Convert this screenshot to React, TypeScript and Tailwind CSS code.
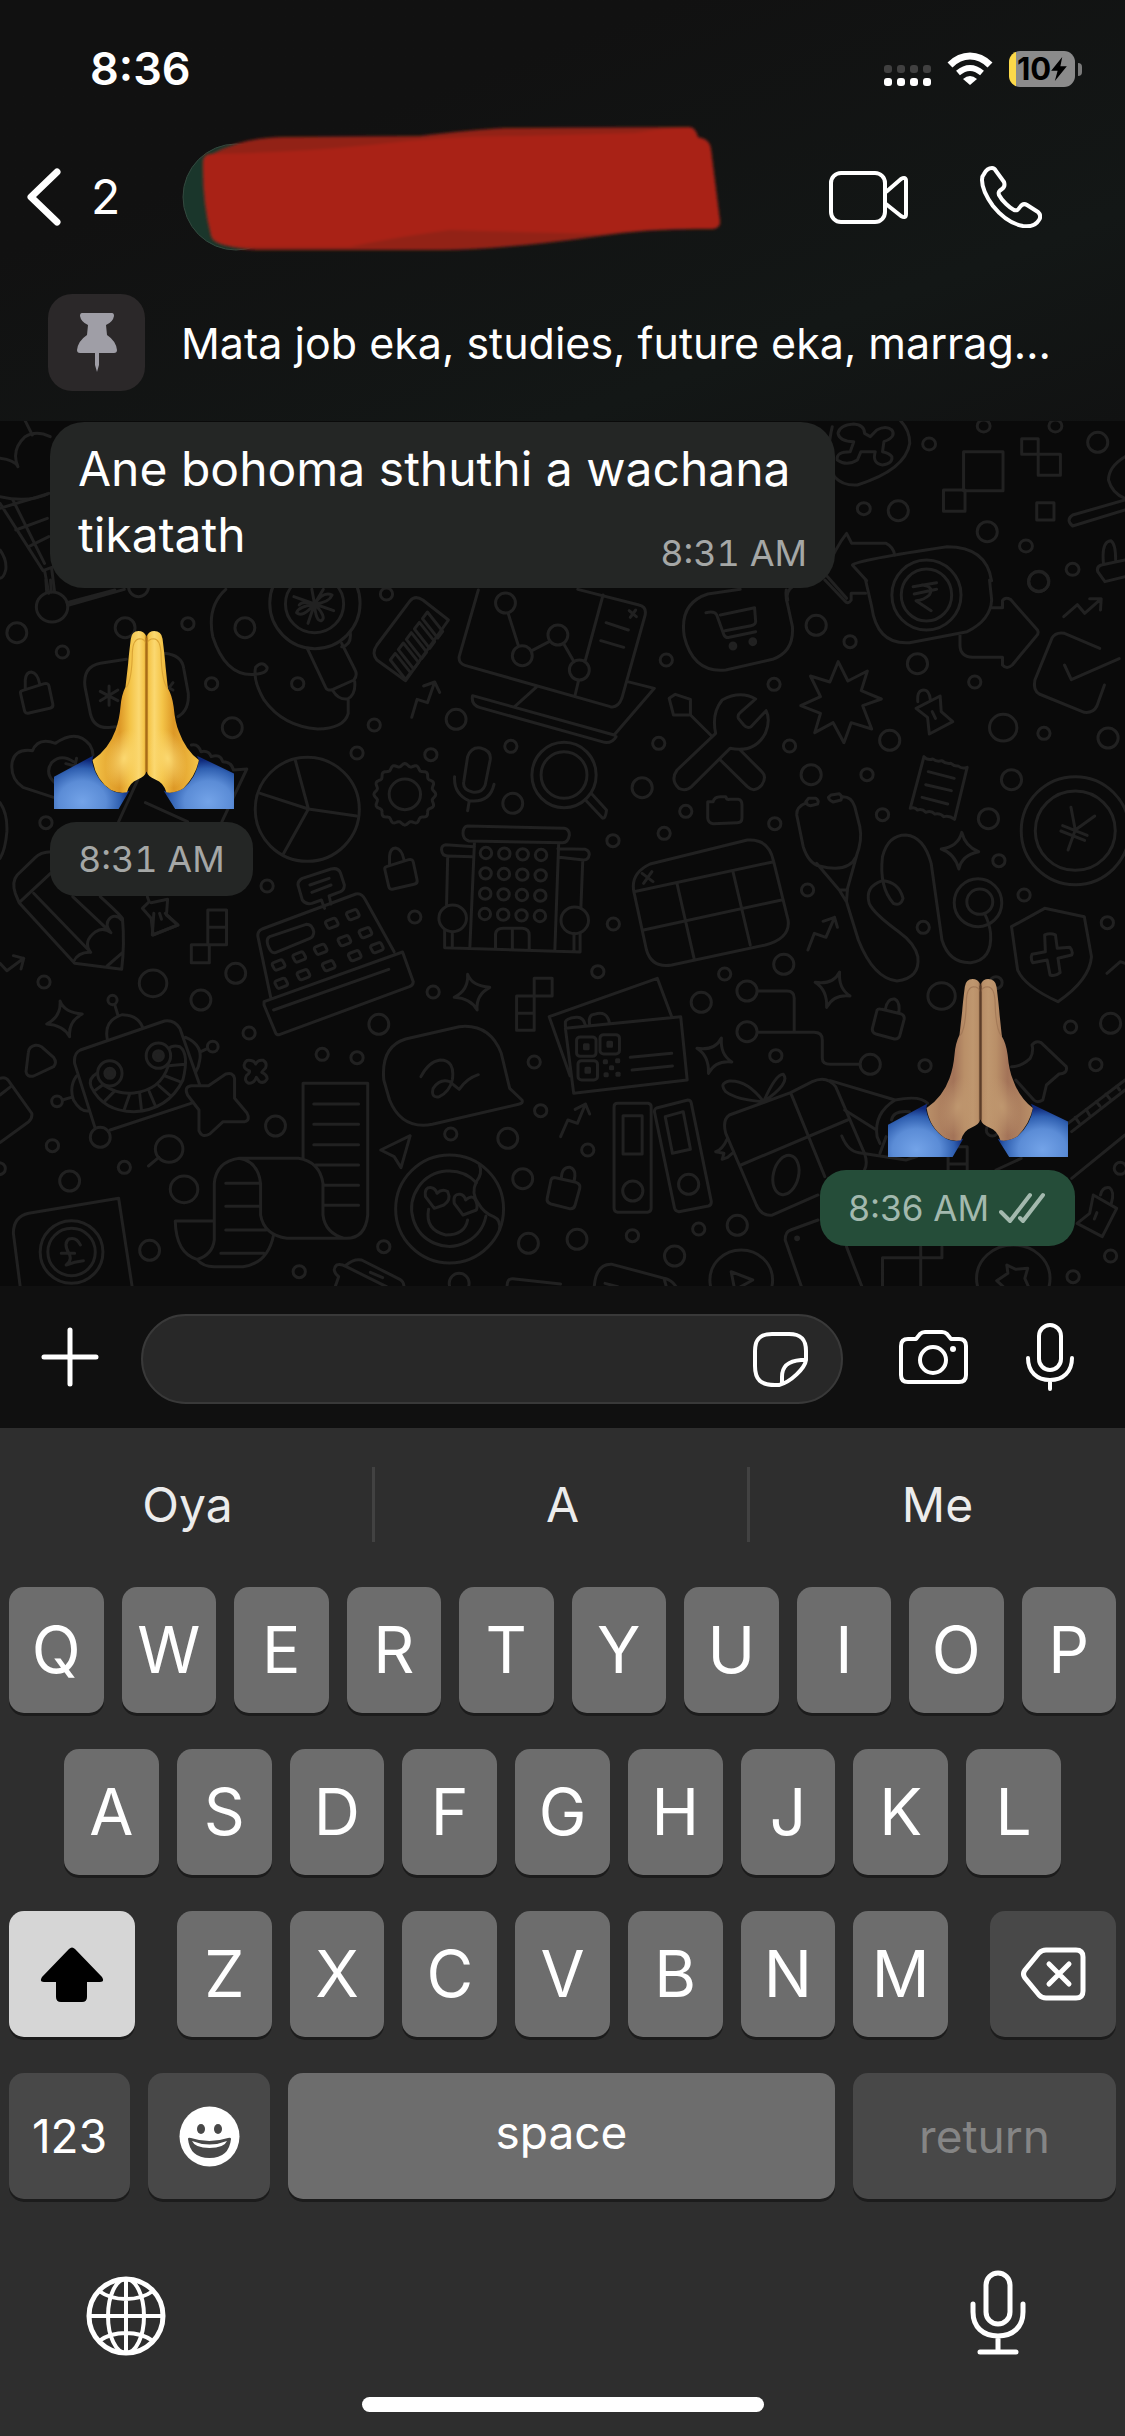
import React from "react";

/* ---------- Wallpaper ---------- */

type Dots = number[][];

function Panel({
  transform,
  rx,
  small,
  medium,
  large = [],
  paths,
  children,
}: {
  transform: string;
  rx: number[];
  small: Dots;
  medium: Dots;
  large?: Dots;
  paths: string[];
  children?: React.ReactNode;
}) {
  return (
    <g transform={transform}>
      {small.map(([x, y]) => (
        <ellipse key={`s${x}-${y}`} cx={x} cy={y} rx={rx[0]} ry={18} />
      ))}
      {medium.map(([x, y]) => (
        <ellipse key={`m${x}-${y}`} cx={x} cy={y} rx={rx[1]} ry={30} />
      ))}
      {large.map(([x, y]) => (
        <ellipse key={`l${x}-${y}`} cx={x} cy={y} rx={rx[2]} ry={40} />
      ))}
      {paths.map((d, i) => (
        <path key={i} d={d} />
      ))}
      {children}
    </g>
  );
}

function scallop(cx: number, cy: number, rx: number, ry: number, n: number) {
  const steps = n * 8;
  let d = "";
  for (let i = 0; i < steps; i++) {
    const a = (i / steps) * Math.PI * 2;
    const k = 1 + 0.05 * Math.cos(a * n);
    d += `${i ? "L" : "M"}${(cx + rx * k * Math.cos(a)).toFixed(1)} ${(cy + ry * k * Math.sin(a)).toFixed(1)}`;
  }
  return d + "Z";
}

const LOCK =
  "M58 332Q52 334 54 342L64 392Q66 402 76 399L130 385Q140 382 138 372L128 318Q126 308 116 311ZM66 328V300Q68 276 82 276Q98 278 104 313";
const SPARK = "M157 243Q168 278 215 282Q178 305 182 350Q165 315 122 312Q160 290 157 243Z";
const SPARK_R = "M776 156Q772 205 805 228Q760 222 740 262Q742 210 708 187Q758 195 776 156Z";

const topPaths = [
  "M35 452L45 495M70 500Q50 480 35 500Q15 540 25 590M0 565Q20 570 25 590M0 680Q40 700 68 670",
  "M0 700L60 902L75 890M18 690L62 880M0 715L66 672M22 780L66 745M40 830L68 800M62 900L68 970M72 895L76 965M0 840Q10 870 8 900Q5 925 0 925",
  "M1160 470Q1150 560 1163 620Q1175 648 1195 645Q1262 600 1268 520Q1268 480 1255 452",
  "M1190 462Q1170 465 1168 490Q1170 515 1190 515L1185 545Q1165 545 1167 570Q1180 590 1195 570L1200 545L1220 545Q1215 580 1230 585Q1245 580 1243 560Q1240 550 1230 545L1232 515Q1250 500 1243 480Q1235 465 1222 480L1213 500L1205 490Q1205 465 1190 462Z",
  "M1343 545H1398V662H1343ZM1315 660H1345V724H1315ZM1424 506H1447V553H1424ZM1447 553H1478V616H1447ZM1445 698H1469V750H1445Z",
  "M1568 560Q1545 590 1545 630Q1550 670 1568 685M1568 690L1495 735Q1485 750 1495 768L1568 720",
  "M1188 885Q1195 870 1320 830Q1375 830 1382 932L1381 932M1188 885L1208 932",
  "M1150 910Q1165 830 1180 790L1187 820H1235Q1245 830 1247 855M1098 990Q1090 940 1150 912L1180 985",
  "M1568 870L1535 885Q1528 890 1530 905L1540 935L1568 920M1538 880Q1535 815 1548 812Q1555 820 1555 870",
];

const leftPaths = [
  "M120 0L122 36M132 0L134 36M175 68L300 30M178 76L325 28",
  LOCK,
  "M330 238L262 250Q216 260 222 320L236 400Q245 448 290 442L305 440M430 220Q475 225 480 265L492 340Q495 390 465 410M285 318V376M262 334L308 362M308 330L262 362M432 318L452 330M434 335L452 308",
  "M140 652L60 622Q25 595 32 545Q40 505 85 512Q100 470 145 490Q200 445 235 495Q243 510 243 525M145 610Q115 580 135 548Q160 520 192 545M200 535L196 558L172 551",
  "M500 495Q518 490 525 515Q545 510 552 530Q575 520 582 545Q605 545 610 570L645 567L580 725M360 600L310 725M380 668L490 725",
  "M0 668Q20 700 18 755Q14 810 0 835",
  "M135 815Q105 815 90 835L45 885Q30 905 40 940L50 968L195 1150L318 1168Q326 1090 320 1015Q310 1000 262 950M50 968L132 880M88 940L237 1117Q205 1115 192 1145M237 1117Q215 1085 250 1055Q270 1040 290 1058M190 950L290 1058Q270 1030 290 1012Q305 1003 318 1020M280 1158L320 1118",
  "M385 950L390 965L372 985L395 1015L400 1065L465 1035L435 1005L438 958L395 968M417 1000L422 1018",
  "M543 990H592V1094H543ZM543 1042H592M500 1094H547V1148H500Z",
  "M590 28Q540 80 556 170Q590 290 665 283Q700 280 698 262Q685 240 668 262Q660 300 690 360Q740 440 830 447Q900 445 910 400V360M803 205L850 320Q855 335 870 328L925 300Q935 285 928 270L893 190M870 332Q885 360 908 357Q930 345 927 305M893 200Q920 195 915 155",
  "M822 72L872 92M822 72L768 50M822 72L805 130M822 72Q780 80 775 98Q790 115 822 72Q825 125 840 122Q855 112 822 72Q860 68 868 45Q845 32 822 72Q790 62 782 75M822 72L815 28M822 72L845 28",
  "M1105 60Q1085 45 1072 62L985 195Q970 220 985 240L1060 302L1172 120Z",
  "M1076 412L1090 358L1117 368L1136 306M1107 318L1136 306L1149 337",
  "M1250 30L1200 230Q1198 250 1215 256L1595 380Q1615 385 1625 355L1686 105Q1690 80 1670 75L1510 28M1576 45L1530 240M1503 345L1512 302M1328 100L1355 198M1390 212L1435 185M1475 195L1500 245M1403 320L1345 380M1235 347L1605 465L1710 325L1640 305M1235 347Q1230 375 1255 383L1580 487Q1600 490 1610 470M1584 128L1642 150M1570 182L1630 202",
  "M772 542L806 687L932 708M806 687L680 640M806 687L740 823",
  "M1222 530Q1232 500 1256 504Q1285 512 1281 540L1268 615Q1260 640 1235 636Q1208 630 1212 605ZM1188 590Q1185 640 1225 662Q1280 670 1291 613M1226 665L1222 692",
  "M1545 640L1585 690Q1583 715 1575 715L1530 660",
  "M1222 738L1475 745Q1488 748 1488 765Q1485 788 1470 788L1225 783Q1210 778 1210 760Q1210 740 1222 738ZM1240 800L1165 794Q1153 796 1154 810Q1155 828 1170 828L1235 830M1458 806L1530 808Q1540 812 1540 823Q1538 840 1525 840L1462 832M1240 785L1228 1100M1460 790L1450 1110M1170 828L1167 975M1523 840L1518 985M1162 1050V1103L1516 1116V1060M1182 1060V1103M1500 1060V1112M1295 1106V1062Q1297 1045 1315 1045H1365Q1383 1047 1383 1065V1108M1339 1045V1106",
  "M780 920Q775 905 790 895L865 867Q885 862 890 880L900 915Q900 930 890 935L860 948L865 972M780 920L790 960Q800 975 815 970L840 960L848 985M810 915L860 895M815 937L865 915M708 1255L675 1075Q670 1055 685 1047L930 942Q945 938 955 960L1030 1115M705 1070L800 1033Q815 1032 820 1055Q820 1070 810 1075L720 1118Q708 1122 700 1095Q695 1075 705 1070M690 1265L1052 1116L1080 1205Q1080 1215 1070 1220L730 1364Q722 1365 720 1358L690 1275ZM715 1290L1016 1168",
];

const registerKeys = [
  [728, 1155], [782, 1131], [838, 1108], [900, 1082], [955, 1058], [735, 1210],
  [793, 1184], [859, 1157], [927, 1127], [985, 1103], [867, 1030], [922, 1004],
];

const rightPaths = [
  "M628 30Q625 50 632 75L645 140Q650 215 590 238L460 270Q370 280 345 170Q330 70 410 42L500 28M405 98Q430 92 435 105L455 165Q460 175 470 172L543 155M445 105L540 83L543 125Q542 135 530 137L458 152",
  "M848 0L865 80Q880 195 970 188L1130 155Q1195 120 1198 60L1192 0M980 20L1045 8M983 42L1045 28M1005 15Q1040 20 1025 45Q1010 60 988 62L1030 92M735 0L790 62Q800 75 808 60V40H848M1198 83H1228V62Q1235 50 1250 58L1325 150Q1330 160 1322 168L1255 255Q1240 270 1228 255V232H1145Q1110 230 1110 195V165",
  "M1398 110L1436 74L1456 100L1500 58M1470 56L1502 56L1500 90",
  "M1498 205L1400 160Q1375 155 1365 175L1318 300Q1312 330 1330 342L1455 397Q1480 400 1490 378L1511 315M1400 255L1419 299L1552 236",
  "M772 245L799 303L853 273L836 332L892 357L840 377L865 447L808 428L788 488L758 428L707 458L723 400L668 377L723 350L695 288L749 306Z",
  "M543 357Q500 330 450 360Q420 400 432 460L325 570Q305 600 330 625Q350 635 365 620L472 505Q540 520 570 460Q585 420 572 392L530 440Q520 447 510 435L495 415Q492 405 500 398ZM303 355L320 343L362 358V405H315ZM362 405L418 465M445 540L520 620Q540 640 560 615Q575 590 560 575L500 510",
  "M993 365Q990 330 1010 330Q1025 330 1028 360M1055 348L988 385L1020 412L1025 462L1090 425L1058 395ZM1033 395L1042 415",
  "M1010 530L972 685Q985 680 992 690Q1005 685 1015 697Q1030 690 1040 702Q1055 698 1065 710Q1080 705 1095 718L1130 562Q1115 568 1105 558Q1095 560 1085 550Q1070 553 1060 542Q1045 547 1035 537Q1020 542 1010 530ZM1022 575L1094 595M1015 614L1086 632M1005 652L1076 672",
  "M410 665H425Q428 650 445 650H460Q463 660 470 658H495Q505 660 505 675V715Q505 728 492 728L425 731Q412 730 410 715Z",
  "M685 668Q655 680 657 705L675 800Q690 850 720 858Q800 880 822 830Q840 780 832 740L818 680Q810 650 785 650M690 655H710Q720 662 715 672L695 677Q683 675 682 665ZM752 645L775 641Q785 648 780 660L758 666Q745 660 745 652ZM712 850L775 930L795 965L828 1080Q870 1195 935 1203Q1000 1195 993 1130Q985 1090 940 1055Q870 1000 858 970Q845 920 895 902Q940 905 952 955Q945 980 925 970Q885 920 895 830Q910 765 960 765Q1010 770 1030 850L1060 1080Q1080 1150 1140 1148Q1200 1140 1195 1060Q1192 1030 1178 1000M825 820L798 925L795 965M775 930H798",
  "M1115 757Q1125 800 1162 815Q1115 825 1107 867Q1095 820 1058 807Q1105 800 1115 757Z",
  "M1418 682L1430 750L1484 708M1430 750L1410 810M1395 737L1463 766M1390 753L1456 781",
  "M205 935Q195 880 250 852L520 780Q580 775 593 845L633 1020Q640 1075 570 1095L310 1155Q255 1165 240 1110ZM205 935L593 845M232 1050L615 960M325 912L372 1135M480 875L528 1095M228 880L258 905M255 875L232 910",
  "M688 1110L706 1060L738 1072L762 1012M730 1024L762 1012L770 1042",
  "M1253 1040L1345 985L1455 1010L1475 1130Q1470 1200 1382 1265Q1290 1220 1270 1170ZM1345 1065Q1360 1058 1375 1065L1380 1105L1415 1102Q1425 1115 1420 1125L1382 1135L1388 1178Q1375 1190 1360 1185L1352 1140L1312 1148Q1305 1135 1310 1123L1347 1115Z",
  "M192 92L212 110M210 90L195 112",
];

const lowerLeftPaths = [
  SPARK,
  "M92 376Q75 380 74 398L68 455Q70 472 88 468L140 440Q150 428 140 412L108 380Q100 374 92 376ZM402 -20L398 45L465 15L432 -20",
  "M0 130L18 152L62 115M35 107L62 115L55 147",
  "M248 622L195 430Q192 400 210 390L430 303Q455 298 470 325L522 495M288 630L505 548M300 255L308 285M280 355Q272 300 320 284Q360 285 373 322M485 352Q530 375 522 420Q520 440 512 455M525 395L543 385M200 468Q180 500 192 540Q210 575 230 573M186 532L163 540",
  "M253 460Q230 475 238 500Q270 575 350 575Q440 570 478 480Q495 400 470 380Q450 375 442 385M270 495Q310 525 350 519Q420 510 440 437M250 510L268 495M275 542L298 515M325 568L338 525M370 573L365 520M405 555L390 515M445 527L415 497M470 485L432 468M483 433L440 437",
  "M590 462Q608 455 613 475V535L645 578Q655 600 640 605L583 605L548 642Q528 655 520 632V570L490 525Q480 500 500 497H545Z",
  "M650 421Q664 421 668 432Q674 418 688 421Q699 428 694 444Q684 455 684 457Q699 465 698 477Q690 492 678 485L670 472Q664 491 650 490Q637 483 644 467Q654 457 652 453Q637 446 638 435Q641 421 650 421Z",
  "M0 475Q15 470 22 482L83 580Q85 595 75 605L0 668M0 525L28 500M415 712L388 738",
  "M55 1120L35 940Q35 890 75 880L310 835L348 1120M210 975Q200 950 180 957Q165 970 180 1000Q190 1020 173 1035Q195 1025 218 1022M160 1000H195",
  "M792 715V490H961V885Q955 955 905 955H750Q690 945 681 885V790Q675 725 625 715H780Q835 725 844 790V885Q850 940 900 955M625 715Q565 725 560 790V960Q555 1005 515 1018M560 903H458Q460 1000 515 1018Q530 1040 560 1040H635Q700 1030 715 945M820 552H937M820 613H937M820 674H937M825 735H937M848 796H937M846 856H937M590 790H680M590 859H680M590 930H695M577 1000H690",
  "M1060 357L1200 320Q1280 310 1310 400L1332 505L1364 540Q1368 550 1355 553L1130 613Q1050 630 1018 540L1003 480Q995 380 1060 357ZM1100 470Q1120 425 1150 420Q1190 420 1182 480Q1175 515 1148 530Q1125 535 1132 505Q1150 475 1175 485L1200 508Q1220 475 1250 464",
  "M1072 647L995 690L1030 710L1048 743Z",
  "M1135 865L1112 830Q1108 800 1128 803Q1138 805 1142 820Q1155 805 1170 815Q1180 840 1160 855ZM1210 885L1187 850Q1183 820 1203 823Q1213 825 1217 840Q1230 825 1240 835Q1250 855 1245 870ZM1120 868Q1110 930 1165 945Q1215 945 1222 900M1253 735Q1262 760 1245 785Q1230 820 1250 850Q1265 880 1290 890Q1310 900 1305 930",
  "M1440 780L1430 835Q1428 848 1440 852L1488 866Q1500 868 1503 855L1515 805Q1518 792 1505 787L1452 773Q1442 772 1440 780ZM1467 775Q1468 740 1490 742Q1508 748 1500 785",
  "M1396 175H1443V228H1396ZM1350 228H1396V331H1350ZM1350 280H1396",
  "M1465 650L1484 600L1509 610L1530 552M1503 568L1530 552L1541 582",
  "M870 1120L885 1070Q865 1050 880 1035Q890 1030 905 1040L1010 1100M905 1035Q925 1015 945 1020L1045 1078Q1055 1085 1056 1100M968 1057L1000 1073M1325 1100Q1325 1075 1340 1076L1465 1092",
];

const lowerRightPaths = [
  SPARK_R,
  "M548 213H630Q650 213 650 235V335M548 337H705Q728 337 728 360V415Q728 433 750 433H832",
  "M880 270L867 325Q865 338 877 342L928 357Q940 358 943 347L955 298Q957 285 945 281L893 268Q883 265 880 270ZM903 268Q908 235 928 237Q945 245 940 280",
  "M-30 290L270 175L310 290M-30 290L28 468M15 325L335 290L353 480L38 520ZM195 412L310 400M200 450L312 438M15 320V305Q18 295 45 292Q65 290 70 315M82 312Q78 285 95 283Q130 270 137 308",
  "M160 550H245Q253 552 253 560V865Q253 875 243 877H160Q150 875 150 865V560Q150 550 160 550ZM175 587H228V702H175ZM262 575Q262 567 268 564L355 540Q362 540 364 548L420 845Q420 855 412 858L330 875Q320 873 318 865ZM292 590L342 575L362 688L312 700Z",
  "M640 518L470 585Q450 600 460 640L545 855Q560 890 590 885L716 825M640 518L700 485Q740 465 765 500L845 700Q855 730 845 750M640 518L735 770M502 735L798 600M565 545Q520 480 470 483Q440 490 460 515Q490 540 565 545Q600 460 620 463Q640 490 565 545M465 655Q450 690 432 695L455 700L450 718L465 712L478 700",
  "M750 482L930 540Q1000 525 1020 550M930 540Q870 580 880 650L888 670M790 570L875 628M782 648Q800 695 830 698L960 720L990 710M888 700L905 650M920 600Q925 570 970 575",
  "M1310 375Q1320 360 1335 368L1405 440Q1410 460 1385 462L1350 495L1340 540Q1325 550 1315 540L1265 480M1253 440Q1280 440 1305 415Q1315 395 1310 375",
  "M1568 480L1410 610M1280 715L1210 750M1568 510L1420 635M1568 645L1420 775M1430 592L1440 608M1460 568L1472 590M1488 545L1498 558M1515 522L1530 542M1545 498L1553 510",
  "M1077 750V680H1130V750M1077 732H1130",
  "M1480 825L1545 865L1505 950L1435 910L1470 880ZM1500 825Q1505 800 1525 803Q1540 815 1530 850M1490 878L1483 897",
  "M475 1055L535 1080L485 1110ZM95 1100Q100 1030 145 1033L290 1075Q310 1080 322 1100M290 1080L295 1100M125 1090L160 1100M670 1100L625 960Q625 935 640 930L716 900M795 980L838 1100M895 1100V1013H1060V980M1001 980V1100M1240 1035L1265 1048L1298 1045L1290 1075L1300 1100M1240 1035L1243 1060L1212 1082L1230 1100M1518 160L1555 125L1568 130",
];

function Wallpaper() {
  return (
    <svg
      aria-hidden="true"
      className="absolute inset-0 h-full w-full [&_*]:[vector-effect:non-scaling-stroke]"
      viewBox="0 421 1125 865"
      preserveAspectRatio="xMidYMid slice"
      fill="none"
      stroke="#212121"
      strokeWidth="3"
      strokeLinecap="round"
      strokeLinejoin="round"
    >
      <Panel
        transform="translate(0 270) scale(0.71747 0.33333)"
        rx={[9, 14]}
        small={[[1371, 468], [1471, 468], [1295, 522], [1204, 716], [1430, 828], [1495, 898]]}
        medium={[[1530, 517], [1252, 722], [1376, 785], [1448, 934]]}
        paths={topPaths}
      />
      <Panel
        transform="translate(0 580) scale(0.38265 0.33333)"
        rx={[16, 26]}
        small={[[491, 131], [163, 216], [553, 311], [778, 311], [1010, 42], [978, 435], [933, 519], [1126, 524], [1335, 499], [120, 728], [698, 918], [1084, 1011]]}
        medium={[[44, 158], [327, 143], [640, 143], [607, 443], [1192, 418], [1340, 670], [362, 20], [1321, 69], [1365, 227], [1458, 165], [1514, 270]]}
        paths={leftPaths}
      >
        <path d={LOCK} transform="translate(952 528)" />
        <ellipse cx={136} cy={81} rx={41} ry={45} />
        <ellipse cx={823} cy={70} rx={118} ry={136} />
        <ellipse cx={822} cy={72} rx={76} ry={86} />
        <ellipse cx={803} cy={688} rx={136} ry={156} />
        <path d={scallop(1058, 643, 77, 88, 16)} />
        <ellipse cx={1058} cy={643} rx={41} ry={46} />
        <ellipse cx={1474} cy={585} rx={84} ry={98} />
        <ellipse cx={1474} cy={585} rx={60} ry={70} />
        <ellipse cx={1183} cy={1015} rx={36} ry={40} />
        <ellipse cx={1502} cy={1021} rx={36} ry={40} />
        {[0, 1, 2, 3, 4].map((i) => (
          <path key={i} d="M1033 220L1073 278L1060 298L1020 240Z" transform={`translate(${i * 21} ${i * -31})`} />
        ))}
        {[0, 1, 2, 3].map((r) =>
          [0, 1, 2, 3].map((c) => (
            <ellipse key={`${r}${c}`} cx={1270 + c * 48 - r} cy={819 + r * 61 + c * 2} rx={15} ry={17} />
          )),
        )}
        {registerKeys.map(([x, y]) => (
          <rect key={`${x}${y}`} x={x - 15} y={y - 12} width={30} height={24} rx={6} transform={`rotate(-24 ${x} ${y})`} />
        ))}
      </Panel>
      <Panel
        transform="translate(560 580) scale(0.36033 0.33333)"
        rx={[17, 28, 38]}
        small={[[295, 240], [594, 313], [805, 185], [1151, 306], [1343, 460], [274, 490], [637, 498], [852, 584], [349, 694], [289, 760], [147, 782], [596, 731], [895, 704], [687, 930], [1218, 842], [1288, 945], [1008, 1042], [1519, 1028], [148, 1032]]}
        medium={[[711, 136], [992, 251], [915, 481], [1328, 5], [1521, 474], [697, 584], [228, 623], [1253, 599], [1189, 716]]}
        large={[[1230, 443]]}
        paths={rightPaths}
      >
        <ellipse cx={1017} cy={45} rx={96} ry={105} />
        <ellipse cx={1017} cy={45} rx={70} ry={78} />
        <ellipse cx={480} cy={198} rx={8} ry={9} fill="#212121" />
        <ellipse cx={535} cy={185} rx={8} ry={9} fill="#212121" />
        <ellipse cx={1160} cy={968} rx={66} ry={72} />
        <ellipse cx={1165} cy={965} rx={36} ry={38} />
        <ellipse cx={1430} cy={752} rx={150} ry={162} />
        <ellipse cx={1430} cy={752} rx={111} ry={119} />
      </Panel>
      <Panel
        transform="translate(0 920) scale(0.38265 0.33333)"
        rx={[16, 26, 36]}
        small={[[115, 186], [651, 339], [842, 403], [933, 413], [1132, 216], [1396, 426], [1413, 572], [1178, 642], [137, 677], [325, 742], [782, 1055], [1003, 980], [1536, 690], [-2, 746]]}
        medium={[[616, 160], [525, 240], [990, 313], [720, 618], [182, 783], [391, 991], [1327, 655], [1366, 776], [1381, 970], [1508, 958], [1200, 1090], [262, 652]]}
        large={[[400, 190], [481, 808], [442, 687]]}
        paths={lowerLeftPaths}
      >
        <path d={SPARK} transform="translate(1065 -80)" />
        <ellipse cx={294} cy={240} rx={12} ry={14} />
        <ellipse cx={556} cy={380} rx={14} ry={16} />
        <ellipse cx={149} cy={544} rx={14} ry={16} />
        <ellipse cx={287} cy={460} rx={32} ry={38} fill="#0a0a0a" />
        <ellipse cx={414} cy={407} rx={32} ry={38} fill="#0a0a0a" />
        <ellipse cx={287} cy={460} rx={13} ry={15} fill="#212121" />
        <ellipse cx={414} cy={407} rx={13} ry={15} fill="#212121" />
        <ellipse cx={187} cy={996} rx={82} ry={94} />
        <ellipse cx={187} cy={996} rx={62} ry={71} />
        <ellipse cx={1175} cy={867} rx={141} ry={162} />
        <path d="M1245 788A98 113 0 1 0 1270 888" />
      </Panel>
      <Panel
        transform="translate(560 920) scale(0.36033 0.33333)"
        rx={[17, 28, 38]}
        small={[[105, 155], [457, 162], [599, 407], [1013, 437], [1210, 188], [1417, 321], [1487, 434], [1200, 630], [201, 947], [385, 927], [1424, 1070], [1528, 1008], [1555, 745]]}
        medium={[[621, 133], [392, 247], [519, 213], [519, 335], [861, 433], [1528, 310], [492, 916], [318, 1008], [202, 813], [357, 793]]}
        large={[[1059, 228]]}
        paths={lowerRightPaths}
      >
        <path d={SPARK_R} transform="translate(-328 198)" />
        {[[73, 380], [138, 373], [77, 451]].map(([x, y]) => (
          <g key={x}>
            <rect x={x - 27} y={y - 29} width={54} height={58} rx={10} />
            <rect x={x - 5} y={y - 6} width={10} height={12} fill="#212121" />
          </g>
        ))}
        {[[126, 425], [160, 422], [143, 443], [128, 464], [161, 463]].map(([x, y]) => (
          <rect key={x} x={x - 3} y={y - 3} width={6} height={6} fill="#212121" />
        ))}
        <ellipse cx={627} cy={765} rx={35} ry={60} transform="rotate(12 627 765)" />
        <ellipse cx={658} cy={955} rx={4} ry={4} fill="#212121" />
        <ellipse cx={503} cy={1080} rx={87} ry={90} />
        <ellipse cx={1258} cy={1075} rx={102} ry={100} />
      </Panel>
    </svg>
  );
}

/* ---------- Folded hands ---------- */

const skins = {
  yellow: { light: "#fbd870", mid: "#f4c448", edge: "#dd9826", line: "#a86c17", crease: "#dba535" },
  tan: { light: "#bf976f", mid: "#b98f68", edge: "#a37358", line: "#5c3d29", crease: "#a47a58" },
};

function FoldedHands({ skin, className = "" }: { skin: "yellow" | "tan"; className?: string }) {
  const c = skins[skin];
  const left =
    "M383 168Q376 152 362 152Q345 152 342 175Q336 230 335 250L328 320Q317 345 315 380Q312 420 302 450Q285 505 242 540Q250 600 290 630Q312 642 332 637Q338 607 360 598Q380 590 383 572Z";
  const right =
    "M383 168Q390 152 403 152Q422 152 425 175Q431 230 433 260L439 325Q450 345 454 380Q458 430 468 455Q485 510 520 540Q513 585 480 625Q455 642 435 637Q428 607 406 598Q386 590 383 572Z";
  return (
    <svg role="img" aria-label="Folded hands" className={`h-[178px] w-[180px] ${className}`} viewBox="0 0 180 178">
      <defs>
        <linearGradient id={`${skin}-l`} x1="242" x2="383" y1="0" y2="0" gradientUnits="userSpaceOnUse">
          <stop offset="0" stopColor={c.mid} />
          <stop offset="0.5" stopColor={c.edge} />
          <stop offset="0.7" stopColor={c.mid} />
          <stop offset="0.86" stopColor={c.light} />
          <stop offset="0.96" stopColor={c.mid} />
          <stop offset="1" stopColor={c.line} />
        </linearGradient>
        <linearGradient id={`${skin}-r`} x1="383" x2="520" y1="0" y2="0" gradientUnits="userSpaceOnUse">
          <stop offset="0" stopColor={c.line} />
          <stop offset="0.04" stopColor={c.mid} />
          <stop offset="0.15" stopColor={c.light} />
          <stop offset="0.3" stopColor={c.mid} />
          <stop offset="0.52" stopColor={c.edge} />
          <stop offset="1" stopColor={c.mid} />
        </linearGradient>
        <radialGradient id={`${skin}-palm`} cx="0.5" cy="0.5" r="0.5">
          <stop offset="0" stopColor={c.light} />
          <stop offset="1" stopColor={c.light} stopOpacity="0" />
        </radialGradient>
        <radialGradient id={`${skin}-s1`} cx="215" cy="665" r="125" gradientUnits="userSpaceOnUse">
          <stop offset="0" stopColor="#73a3e8" />
          <stop offset="0.5" stopColor="#5b8cd6" />
          <stop offset="0.8" stopColor="#2f5fb0" />
          <stop offset="1" stopColor="#0f2a7c" />
        </radialGradient>
        <radialGradient id={`${skin}-s2`} cx="545" cy="665" r="125" gradientUnits="userSpaceOnUse">
          <stop offset="0" stopColor="#73a3e8" />
          <stop offset="0.5" stopColor="#5b8cd6" />
          <stop offset="0.8" stopColor="#2f5fb0" />
          <stop offset="1" stopColor="#0f2a7c" />
        </radialGradient>
      </defs>
      <g transform="scale(0.3822 0.3327) translate(-141 -152)">
        <path d="M243 527L141 590V687H310L338 632Q310 645 290 630Q250 600 241 545Z" fill={`url(#${skin}-s1)`} />
        <path d="M515 527L612 580V687H458L428 632Q450 645 480 625Q515 590 520 540Z" fill={`url(#${skin}-s2)`} />
        <path d={left} fill={`url(#${skin}-l)`} />
        <path d={right} fill={`url(#${skin}-r)`} />
        <ellipse cx="325" cy="535" rx="48" ry="90" fill={`url(#${skin}-palm)`} transform="rotate(12 325 535)" />
        <ellipse cx="438" cy="535" rx="48" ry="90" fill={`url(#${skin}-palm)`} transform="rotate(-12 438 535)" />
        <path
          d="M330 322Q345 300 346 215Q348 176 365 175Q378 175 382 190M438 325Q422 300 421 215Q418 176 402 175Q388 175 384 190"
          fill="none"
          stroke={c.crease}
          strokeWidth="3"
        />
        <path d="M383 172V575" stroke={c.line} strokeWidth="5" />
      </g>
    </svg>
  );
}

/* ---------- Header ---------- */

function StatusBar() {
  return (
    <div className="flex items-center justify-between pt-[41px] pr-[43px] pb-[27px] pl-[90px]">
      <span className="text-[45px] leading-[56px] font-semibold">8:36</span>
      <div className="flex items-center gap-4">
        <div className="grid grid-cols-4 gap-[5px] pt-3">
          {[0, 1, 2, 3, 4, 5, 6, 7].map((i) => (
            <span key={i} className={`size-2 rounded-[3px] ${i < 4 ? "bg-[#404040]" : "bg-white"}`} />
          ))}
        </div>
        <svg aria-hidden="true" className="h-[34px] w-[46px]" viewBox="0 0 46 34" fill="none" stroke="white" strokeWidth="7">
          <path d="M3 13Q12 4 23 4Q34 4 43 13" />
          <path d="M11 21Q17 16 23 16Q29 16 35 21" strokeWidth="6" />
          <path d="M23 33L16 27Q23 21 30 27Z" fill="white" stroke="none" />
        </svg>
        <div className="flex items-center gap-[3px]">
          <div className="flex h-9 w-[66px] items-center rounded-[11px] bg-linear-to-r from-[#fcd94a] from-[7px] to-[#8b8b8b] to-[7px] pl-2 text-black">
            <span className="text-[31px] leading-9 font-bold">10</span>
            <svg aria-hidden="true" className="h-6 w-4 shrink-0" viewBox="0 0 17 26">
              <path d="M12 0L0 15H7L4 26L17 10H10Z" />
            </svg>
          </div>
          <span className="h-[13px] w-1 rounded-r-full bg-[#7a7a7a]" />
        </div>
      </div>
    </div>
  );
}

function Redaction() {
  return (
    <svg role="img" aria-label="Contact" className="h-[146px] w-[542px]" viewBox="182 124 542 146">
      <defs>
        <filter id="soft" x="-5%" y="-10%" width="110%" height="120%">
          <feGaussianBlur stdDeviation="1.6" />
        </filter>
      </defs>
      <circle cx="236" cy="197" r="53" fill="#1a362b" stroke="#33493f" strokeWidth="1" />
      <g filter="url(#soft)">
        <path
          d="M212 154Q245 137 285 137L420 136Q470 130 505 128L690 127Q696 128 698 137Q709 139 711 150L716 190L720 222Q720 228 712 229Q650 228 600 236Q500 250 440 250H265Q230 250 213 240L204 160Z"
          fill="#922318"
        />
        <path
          d="M210 154Q290 153 370 145Q450 135 520 136L635 133Q670 127 692 128Q696 132 698 138Q710 138 711 150L716 190L720 222Q720 228 712 229Q660 228 600 234Q520 232 450 230Q390 238 350 247H245Q215 247 211 236Q202 200 203 160Q205 154 210 154Z"
          fill="#a92418"
        />
      </g>
    </svg>
  );
}

function Header() {
  return (
    <header className="bg-linear-to-br from-[#111111] from-30% via-[#131716] via-75% to-[#111212]">
      <StatusBar />
      <div className="flex items-center pr-[83px] pl-[27px]">
        <button type="button" aria-label="Back, 2 unread chats" className="flex w-[155px] items-center gap-[30px]">
          <svg aria-hidden="true" className="h-[58px] w-[34px]" viewBox="0 0 34 58" fill="none" stroke="white" strokeWidth="7" strokeLinecap="round" strokeLinejoin="round">
            <path d="M30 4L4 29L30 54" />
          </svg>
          <span className="text-[48px] leading-[60px]">2</span>
        </button>
        <Redaction />
        <div className="ml-auto flex items-center gap-[72px]">
          <button type="button" aria-label="Video call">
            <svg aria-hidden="true" className="h-[53px] w-[79px]" viewBox="0 0 79 53" fill="none" stroke="white" strokeWidth="4" strokeLinejoin="round">
              <rect x="2" y="2" width="54" height="49" rx="10" />
              <path d="M57 21L72 8Q77 5 77 10V43Q77 48 72 45L57 33" />
            </svg>
          </button>
          <button type="button" aria-label="Voice call">
            <svg aria-hidden="true" className="h-[62px] w-[62px]" viewBox="0 0 62 62" fill="none" stroke="white" strokeWidth="4" strokeLinejoin="round">
              <path d="M4 8C6 4 9 2 12 2C14 2 15 3 16 5L24 16C25 19 25 21 22 23C19 25 18 26 19 29C22 35 30 42 34 44C37 45 38 44 40 41C42 38 44 37 47 39L58 46C60 48 61 51 59 54C56 59 50 61 43 60C32 58 21 50 13 40C5 29 2 20 2 14C2 11 3 9 4 8Z" />
            </svg>
          </button>
        </div>
      </div>
      <div className="flex items-center gap-9 pt-6 pr-[60px] pb-[30px] pl-12">
        <span className="flex size-[97px] shrink-0 items-center justify-center rounded-[24px] bg-[#2b2829]">
          <svg aria-hidden="true" className="h-[59px] w-10" viewBox="0 0 40 59" fill="#9f9ea6">
            <path d="M5 0H35Q37 0 37 3Q36 9 29 12L30 22Q39 28 40 37Q40 40 37 40H22V52L20 59L18 52V40H3Q0 40 0 37Q1 28 10 22L11 12Q4 9 3 3Q3 0 5 0Z" />
          </svg>
        </span>
        <p className="min-w-0 text-[43px] leading-[54px] whitespace-nowrap">Mata job eka, studies, future eka, marrag…</p>
      </div>
    </header>
  );
}

/* ---------- Chat ---------- */

function Chat() {
  return (
    <main className="relative flex-1 overflow-hidden bg-[#0a0a0a]">
      <Wallpaper />
      <div className="relative flex flex-col items-start px-[50px] pt-px pb-[39px]">
        <div className="flex w-[785px] max-w-full flex-col rounded-[34px] bg-[#242625] px-7 pt-[14px] pb-[15px]">
          <p className="text-[48px] leading-[66px]">Ane bohoma sthuthi a wachana tikatath</p>
          <time className="-mt-[35px] self-end text-[36px] leading-10 text-[#a5a7a6] tabular-nums">8:31 AM</time>
        </div>
        <FoldedHands skin="yellow" className="mt-[43px] ml-1" />
        <div className="mt-[13px] rounded-[26px] bg-[#242625] px-7 py-[17px]">
          <time className="block text-[36px] leading-10 text-[#a5a7a6] tabular-nums">8:31 AM</time>
        </div>
        <FoldedHands skin="tan" className="mt-[83px] mr-[7px] self-end" />
        <div className="mt-[13px] flex items-center gap-[10px] self-end rounded-[26px] bg-[#254d39] py-[18px] pr-[30px] pl-7">
          <time className="text-[35px] leading-10 text-[#a3b9ae]">8:36 AM</time>
          <svg role="img" aria-label="Delivered" className="h-8 w-[46px]" viewBox="0 0 46 32" fill="none" stroke="#a3b9ae" strokeWidth="4" strokeLinecap="round" strokeLinejoin="round">
            <path d="M2 20L11 29L31 3M21 26L24 29L44 3" />
          </svg>
        </div>
      </div>
    </main>
  );
}

function Composer() {
  return (
    <div className="flex items-center bg-[#101010] pt-7 pr-[51px] pb-6 pl-[41px]">
      <button type="button" aria-label="Attach" className="mr-[42px] pb-1">
        <svg aria-hidden="true" className="h-[60px] w-[58px]" viewBox="0 0 58 60" stroke="white" strokeWidth="5" strokeLinecap="round">
          <path d="M3 30H55M29 3V57" />
        </svg>
      </button>
      <div className="flex h-[90px] min-w-0 flex-1 items-center rounded-full border-2 border-[#393939] bg-[#282828] pr-[33px] pl-10">
        <input type="text" aria-label="Message" className="min-w-0 flex-1 bg-transparent text-[48px] outline-none" />
        <button type="button" aria-label="Stickers">
          <svg aria-hidden="true" className="size-[55px]" viewBox="0 0 55 55" fill="none" stroke="white" strokeWidth="4" strokeLinejoin="round">
            <path d="M53 28V19C53 7 48 2 36 2H19C7 2 2 7 2 19V34C2 48 8 53 22 53H26C38 50 52 36 53 28ZM53 28H48C35 29 29 34 29 45V52" />
          </svg>
        </button>
      </div>
      <button type="button" aria-label="Camera" className="mr-[58px] ml-14 pb-1">
        <svg aria-hidden="true" className="h-[54px] w-[69px]" viewBox="0 0 69 54" fill="none" stroke="white" strokeWidth="4" strokeLinejoin="round">
          <path d="M9 9H17L21 4Q23 2 26 2H43Q46 2 48 4L52 9H60Q67 9 67 16V45Q67 52 60 52H9Q2 52 2 45V16Q2 9 9 9Z" />
          <circle cx="34" cy="30" r="13" />
          <circle cx="54" cy="19" r="3" fill="white" stroke="none" />
        </svg>
      </button>
      <button type="button" aria-label="Record voice message" className="pb-1">
        <svg aria-hidden="true" className="h-[68px] w-12" viewBox="0 0 48 68" fill="none" stroke="white" strokeWidth="4" strokeLinecap="round">
          <rect x="13" y="2" width="22" height="45" rx="11" />
          <path d="M2 35C2 49 11 57 24 57S46 49 46 35M24 57V66" />
        </svg>
      </button>
    </div>
  );
}

/* ---------- Keyboard ---------- */

function Key({ children, label, className }: { children: React.ReactNode; label?: string; className: string }) {
  return (
    <button
      type="button"
      aria-label={label}
      className={`flex h-[126px] items-center justify-center rounded-[15px] shadow-[0_3px_0_#1c1c1c] ${className}`}
    >
      {children}
    </button>
  );
}

function Letters({ keys }: { keys: string }) {
  return (
    <>
      {keys.split("").map((k) => (
        <Key key={k} className="min-w-0 flex-1 bg-[#6d6d6d] text-[64px] leading-none">
          {k}
        </Key>
      ))}
    </>
  );
}

function Keyboard() {
  return (
    <section aria-label="Keyboard" className="bg-[#2e2e2e]">
      <div className="grid grid-cols-3 pt-[39px] pb-[45px]">
        {["Oya", "A", "Me"].map((word) => (
          <button
            key={word}
            type="button"
            className="h-[75px] border-r-[3px] border-[#424242] pl-[3px] text-[48px] leading-[60px] text-[#ececec] last:border-transparent"
          >
            {word}
          </button>
        ))}
      </div>
      <div className="flex flex-col gap-9 px-[9px]">
        <div className="flex gap-[18px]">
          <Letters keys="QWERTYUIOP" />
        </div>
        <div className="flex gap-[18px] px-[55px]">
          <Letters keys="ASDFGHJKL" />
        </div>
        <div className="flex gap-[42px]">
          <Key label="Shift" className="w-[126px] bg-[#d6d6d6]">
            <svg aria-hidden="true" className="h-[55px] w-16" viewBox="0 0 64 55">
              <path d="M29 2Q32 -1 35 2L62 30Q65 35 60 35H47V50Q47 55 42 55H21Q16 55 16 50V35H4Q-1 35 2 30Z" />
            </svg>
          </Key>
          <div className="flex min-w-0 flex-1 gap-[18px]">
            <Letters keys="ZXCVBNM" />
          </div>
          <Key label="Delete" className="w-[126px] bg-[#484848]">
            <svg aria-hidden="true" className="h-[54px] w-[65px]" viewBox="0 0 65 54" fill="none" stroke="white" strokeWidth="5" strokeLinecap="round" strokeLinejoin="round">
              <path d="M25 3H55Q62 3 62 10V44Q62 51 55 51H25Q21 51 18 48L4 31Q1 27 4 23L18 6Q21 3 25 3Z" />
              <path d="M28 17L48 37M48 17L28 37" />
            </svg>
          </Key>
        </div>
        <div className="flex gap-[18px]">
          <Key className="w-[121px] bg-[#484848] text-[46px]">123</Key>
          <Key label="Emoji" className="w-[122px] bg-[#484848]">
            <svg aria-hidden="true" className="h-[61px] w-[61px]" viewBox="0 0 61 61" fill="#484848">
              <circle cx="30.5" cy="30.5" r="30" fill="white" />
              <ellipse cx="22" cy="23" rx="4" ry="5" />
              <ellipse cx="39" cy="23" rx="4" ry="5" />
              <path d="M9 33Q9 31 12 32Q30 38 49 32Q52 31 52 33Q50 52 30.5 52Q11 52 9 33Z" />
              <path d="M13 35Q30.5 42 48 35Q45 42 30.5 42Q16 42 13 35Z" fill="white" />
            </svg>
          </Key>
          <Key className="min-w-0 flex-1 bg-[#6d6d6d] pb-2 text-[46px]">space</Key>
          <Key className="w-[263px] bg-[#484848] text-[46px] text-[#858585]">return</Key>
        </div>
      </div>
      <div className="flex items-center justify-between pt-[71px] pr-[99px] pb-[41px] pl-[86px]">
        <button type="button" aria-label="Next keyboard" className="pt-[6px]">
          <svg aria-hidden="true" className="size-20" viewBox="0 0 80 80" fill="none" stroke="white" strokeWidth="5">
            <circle cx="40" cy="40" r="37" />
            <ellipse cx="40" cy="40" rx="18" ry="37" strokeWidth="4" />
            <path d="M40 3V77M3 40H77M13 15Q24 23 40 23Q56 23 67 15M13 65Q24 57 40 57Q56 57 67 65" strokeWidth="4" />
          </svg>
        </button>
        <button type="button" aria-label="Dictation">
          <svg aria-hidden="true" className="h-[86px] w-14" viewBox="0 0 56 86" fill="none" stroke="white" strokeWidth="5" strokeLinecap="round">
            <rect x="16" y="3" width="24" height="51" rx="12" />
            <path d="M3 34V42C3 57 13 66 28 66S53 57 53 42V34M28 66V82M10 82H46" />
          </svg>
        </button>
      </div>
      <div className="mx-auto h-[15px] w-[402px] rounded-full bg-white" />
      <div className="h-6" />
    </section>
  );
}

export default function App() {
  return (
    <div className="flex min-h-screen flex-col bg-[#111111] font-['Inter','Liberation_Sans',sans-serif] text-white">
      <Header />
      <Chat />
      <Composer />
      <Keyboard />
    </div>
  );
}
